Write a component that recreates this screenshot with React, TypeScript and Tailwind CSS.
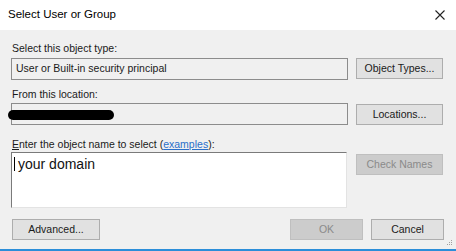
import React from "react";

const btn =
  "h-[21px] border border-[#adadad] bg-[#e1e1e1] text-[10.5px] text-[#1a1a1a] flex items-center justify-center";
const btnOff =
  "h-[21px] border border-[#bfbfbf] bg-[#cccccc] text-[10.5px] text-[#8a8a8a] flex items-center justify-center";

const App = () => {
  return (
    <div
      className="w-[456px] h-[251px] flex flex-col bg-white overflow-hidden"
      style={{ fontFamily: '"Liberation Sans", Arial, sans-serif' }}
    >
      {/* title bar */}
      <div className="h-[30px] flex items-center justify-between pl-[8px] pr-[10px] bg-white">
        <span className="text-[11.5px] text-black">Select User or Group</span>
        <svg width="10" height="10" viewBox="0 0 10 10" className="mr-[1px]">
          <path d="M0.5 0.5 L9.5 9.5 M9.5 0.5 L0.5 9.5" stroke="#222" strokeWidth="1.1" />
        </svg>
      </div>

      <div className="relative flex-1 bg-[#f0f0f0] border-b-2 border-[#2b8ed9] pl-[11px] text-[10.5px] text-[#1a1a1a]">
        <div className="mt-[11px] h-[15px] pl-[1px] leading-[15px]">Select this object type:</div>
        <div className="mt-[2px] flex items-start gap-[8px]">
          <div className="w-[337px] h-[22px] border border-[#8c8c8c] bg-[#f0f0f0] flex items-center pl-[4px]">
            User or Built-in security principal
          </div>
          <button className={btn + " w-[87px]"}>Object Types...</button>
        </div>

        <div className="mt-[7px] h-[15px] pl-[1px] leading-[15px]">From this location:</div>
        <div className="mt-[1px] flex items-start gap-[8px]">
          <div className="relative w-[337px] h-[22px] border border-[#8c8c8c] bg-[#f0f0f0]">
            <div className="absolute left-[-4px] top-[6px] w-[106px] h-[10px] rounded-full bg-black" />
          </div>
          <button className={btn + " w-[87px] mt-[1px]"}>Locations...</button>
        </div>

        <div className="mt-[12px] h-[15px] pl-[1px] leading-[15px]">
          <span className="underline">E</span>nter the object name to select (
          <span className="text-[#2a6fc9] underline">examples</span>):
        </div>
        <div className="flex items-start gap-[9px]">
          <div className="w-[336px] h-[56px] border border-[#7a7a7a] border-r-[#e3e3e3] border-b-[#e3e3e3] bg-white pl-[2px] pt-[3px] flex items-start">
            <span className="mt-[1px] w-[1px] h-[14px] bg-black" />
            <span className="ml-[3px] text-[14px] leading-[16px] text-[#111]">your domain</span>
          </div>
          <button className={btnOff + " w-[87px] mt-[2px]"}>Check Names</button>
        </div>

        <div className="mt-[11px] flex items-start pl-[1px]">
          <button className={btn + " w-[88px]"}>Advanced...</button>
          <div className="flex-1" />
          <button className={btnOff + " w-[73px]"}>OK</button>
          <button className={btn + " ml-[8px] w-[73px]"}>Cancel</button>
          <div className="w-[12px]" />
        </div>

        {/* resize grip */}
        <svg width="6" height="6" viewBox="0 0 6 6" className="absolute right-[3px] bottom-[3px]">
          <rect x="4" y="0" width="1" height="1" fill="#a0a0a0" />
          <rect x="2" y="2" width="1" height="1" fill="#a0a0a0" />
          <rect x="4" y="2" width="1" height="1" fill="#a0a0a0" />
          <rect x="0" y="4" width="1" height="1" fill="#a0a0a0" />
          <rect x="2" y="4" width="1" height="1" fill="#a0a0a0" />
          <rect x="4" y="4" width="1" height="1" fill="#a0a0a0" />
        </svg>
      </div>
    </div>
  );
};

export default App;
